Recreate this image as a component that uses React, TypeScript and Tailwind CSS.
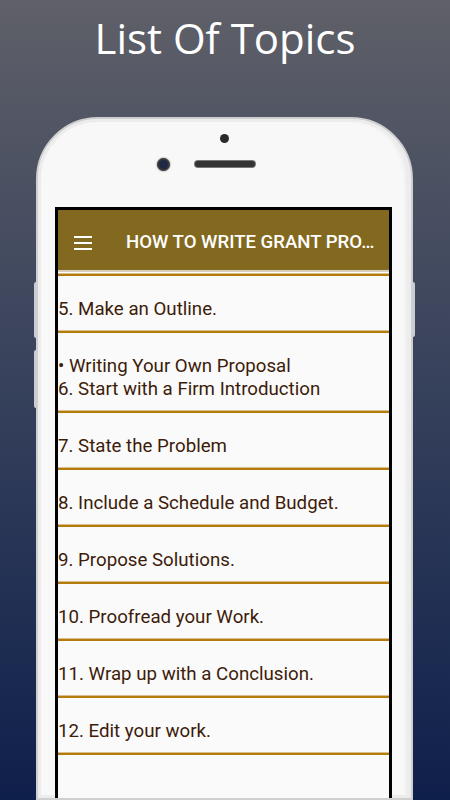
import React from "react";

const items: string[][] = [
  ["5. Make an Outline."],
  ["• Writing Your Own Proposal", "6. Start with a Firm Introduction"],
  ["7. State the Problem"],
  ["8. Include a Schedule and Budget."],
  ["9. Propose Solutions."],
  ["10. Proofread your Work."],
  ["11. Wrap up with a Conclusion."],
  ["12. Edit your work."],
];

function Divider() {
  return (
    <div className="flex flex-col shrink-0">
      <div className="h-[1px] bg-[#d9bf8f]" />
      <div className="h-[2px] bg-[#b67c0b]" />
    </div>
  );
}

export default function App() {
  return (
    <div className="w-[450px] h-[800px] overflow-hidden flex flex-col bg-gradient-to-b from-[#5f6068] to-[#0f1f4b]">
      <div className="h-[117px] shrink-0 flex justify-center pt-[8px]">
        <div
          className="text-white text-[42px] leading-[60px]"
          style={{ fontFamily: '"Open Sans", "Noto Sans", sans-serif' }}
        >
          List Of Topics
        </div>
      </div>

      <div className="relative flex-1 ml-[36px] w-[377px]">
        {/* side buttons */}
        <div className="absolute left-[-2px] top-[165px] w-[2px] h-[56px] bg-[#c9ccd3] rounded-l-sm" />
        <div className="absolute left-[-2px] top-[233px] w-[2px] h-[58px] bg-[#c9ccd3] rounded-l-sm" />
        <div className="absolute right-[-2px] top-[165px] w-[2px] h-[55px] bg-[#c9ccd3] rounded-r-sm" />

        <div className="h-full rounded-t-[62px] border-[2px] border-[#cfcfd1] bg-[#f8f8f8] shadow-[inset_0_0_0_3px_#ececec,inset_-6px_0_6px_-3px_#dcdcdc] flex flex-col">
          {/* bezel */}
          <div className="h-[88px] shrink-0 flex flex-col items-center">
            <div className="mt-[15px] w-[9px] h-[9px] rounded-full bg-[#2a2a2a]" />
            <div className="relative mt-[18px] w-full flex justify-center">
              <div className="w-[60px] h-[6px] rounded-full bg-[#333333] shadow-[0_0_0_1px_#777]" />
              <div className="absolute left-[119px] top-[-3px] w-[13px] h-[13px] rounded-full bg-[#1d2a45] border-[2px] border-[#3a3a3a] shadow-[0_0_2px_#666]" />
            </div>
          </div>

          {/* screen */}
          <div className="ml-[17px] w-[337px] flex-1 border-[3px] border-b-0 border-black bg-[#fafafa] flex flex-col">
            <div className="h-[60px] shrink-0 bg-[#83691f] flex items-center pt-[6px]">
              <div className="ml-[16px] w-[18px] flex flex-col gap-[4px]">
                <div className="h-[2px] bg-white" />
                <div className="h-[2px] bg-white" />
                <div className="h-[2px] bg-white" />
              </div>
              <div
                className="ml-[34px] text-white text-[18.6px] font-medium whitespace-nowrap"
                style={{ fontFamily: "Roboto, sans-serif" }}
              >
                HOW TO WRITE GRANT PRO…
              </div>
            </div>
            <div className="h-[2px] bg-[#d8cfbd]" />
            <div className="h-[1px] bg-white" />
            <Divider />
            {items.map((lines, i) => (
              <React.Fragment key={i}>
                <div
                  className="pt-[22px] pb-[9px] text-[18.7px] leading-[23px] text-[#3d1c0a]"
                  style={{ fontFamily: "Roboto, sans-serif" }}
                >
                  {lines.map((l, j) => (
                    <div key={j} className="whitespace-nowrap">
                      {l}
                    </div>
                  ))}
                </div>
                <Divider />
              </React.Fragment>
            ))}
            <div className="flex-1" />
          </div>
        </div>
      </div>
    </div>
  );
}
